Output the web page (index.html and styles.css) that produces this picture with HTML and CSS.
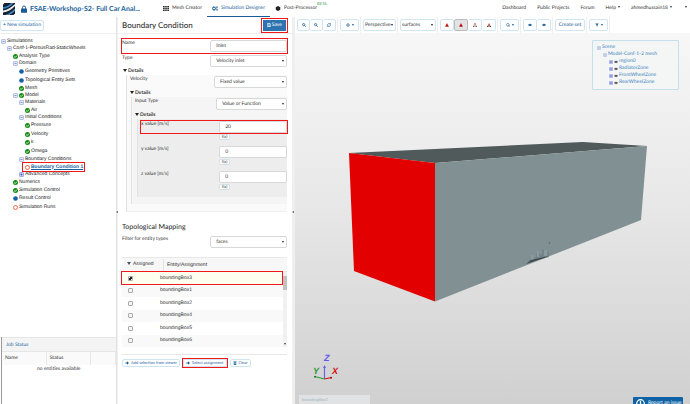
FILE: index.html
```html
<!DOCTYPE html>
<html lang="en">
<head>
<meta charset="utf-8">
<title>FSAE-Workshop-S2 - Simulation Designer</title>
<link rel="stylesheet" href="styles.css">
</head>
<body>
<svg class="defs" aria-hidden="true">
  <symbol id="ok" viewBox="0 0 10 10"><circle cx="5" cy="5" r="5" fill="#138a13"/><path d="M2.4 5.2 4.4 7.1 7.8 3.3" fill="none" stroke="#fff" stroke-width="1.7"/></symbol>
  <symbol id="dot" viewBox="0 0 10 10"><circle cx="5" cy="5" r="4.6" fill="#1261a8"/></symbol>
  <symbol id="ring" viewBox="0 0 10 10"><circle cx="5" cy="5" r="4" fill="#fff" stroke="#ee5a30" stroke-width="1.8"/></symbol>
  <symbol id="minus" viewBox="0 0 10 10"><rect x="1" y="1" width="8" height="8" rx="1" fill="#e4ebfa" stroke="#a3b5de" stroke-width="1.6"/><path d="M3 5h4" stroke="#5c72ac" stroke-width="1.4"/></symbol>
  <symbol id="plus" viewBox="0 0 10 10"><rect x="1" y="1" width="8" height="8" rx="1" fill="#d0d6fa" stroke="#8f9be0" stroke-width="1.6"/><path d="M3 5h4M5 3v4" stroke="#3342a8" stroke-width="1.4"/></symbol>
  <symbol id="eye" viewBox="0 0 12 10"><path d="M0 5Q6-2 12 5 6 12 0 5Z" fill="#444"/><circle cx="6" cy="5" r="1.6" fill="#ddd"/></symbol>
  <symbol id="zoomer" viewBox="0 0 10 10"><circle cx="4" cy="4" r="2.8" fill="#dbeaf6" stroke="#1b5c98" stroke-width="1.8"/><path d="m6 6 3.2 3.2" stroke="#1b5c98" stroke-width="2.2"/></symbol>
  <symbol id="fit" viewBox="0 0 10 10"><path d="M1.2 4.5A4 4 0 0 1 8 2.5M8.8 5.5A4 4 0 0 1 2 7.5" fill="none" stroke="#1b5c98" stroke-width="1.6"/><path d="M9.5 0v4H5.6zM.5 10V6h3.9z" fill="#1b5c98"/></symbol>
  <symbol id="move" viewBox="0 0 10 10"><path d="M5 0 7 2.4H5.9v1.7h1.7V3L10 5 7.6 7V5.900H5.900v1.700H7L5 10 3 7.600h1.100V5.900H2.400V7L0 5l2.400-2v1.100h1.700V2.400H3z" fill="#1b5c98"/></symbol>
  <symbol id="gear" viewBox="0 0 10 10"><path d="M1.500 6.500A3.600 3.600 0 1 1 7.500 6.800" fill="none" stroke="#1b5c98" stroke-width="1.500"/><path d="M5 6h4L8 9.500zM3.500 6.500h2v3h-2z" fill="#1b5c98"/></symbol>
  <symbol id="eyeb" viewBox="0 0 12 10"><path d="M0 5Q6-2 12 5 6 12 0 5Z" fill="#1b5c98"/><path d="M5 3.500h2M6 5v1" stroke="#fff"/></symbol>
  <symbol id="funnel" viewBox="0 0 10 10"><path d="M.5 1h9L6.200 5v4.500L3.800 8V5z" fill="#1b5c98"/></symbol>
  <symbol id="tri" viewBox="0 0 10 10"><path d="M5 0 7 4.500 9.800 9H.2L3 4.500z" fill="#d20c0c"/><path d="M1 8.500h8M3.600 4l2.800 4" stroke="#6d1010"/></symbol>
  <symbol id="tri-line" viewBox="0 0 10 10"><path d="M5 1 9 9H1z" fill="#fff" stroke="#555" stroke-width="1.200"/><path d="m3 6 2-1.500L7 6" fill="none" stroke="#d33"/><path d="M0 8h2.500v2H0zM7.500 8H10v2H7.500zM4 0h2v2H4z" fill="#b33"/></symbol>
  <symbol id="tri-half" viewBox="0 0 10 10"><path d="M5 0 8 6H2.500z" fill="#e01515"/><path d="M1 9 3 5.500 5 9 7 5.500 9 9z" fill="#fff" stroke="#333"/><path d="M0 8h2.200v2H0zM7.800 8H10v2H7.800z" fill="#222"/></symbol>
  <symbol id="arrow" viewBox="0 0 10 10"><path d="M1 3.500h4V.5L9.800 5 5 9.500v-3H1z" fill="#1b5c98"/></symbol>
</svg>

<header class="top">
  <svg class="logo" viewBox="0 0 24 24" aria-label="Logo"><path d="M0 3 3 0h21v21l-3 3H0z" fill="#17212b"/><path d="M0 8C8 8 13 3 17 0h4C16 6 9 11 0 12z" fill="#3c82c4"/><path d="M0 15C9 14 17 8 24 2v4C17 13 9 18 0 19z" fill="#e8eef3"/><path d="M4 24C12 22 19 16 24 11v4C20 20 15 23 11 24z" fill="#4a8ccb"/></svg>
  <svg class="lock" viewBox="0 0 12 15" aria-label="Private"><path d="M3 7V4.500a3 3 0 0 1 6 0V7" fill="none" stroke="#1b5a94" stroke-width="2"/><rect y="6.500" width="12" height="8.500" rx="1" fill="#1b5a94"/></svg>
  <h1 class="project">FSAE-Workshop-S2- Full Car Anal...</h1>
  <nav class="tabs">
    <a class="tab" href="#mesh"><svg viewBox="0 0 12 10"><path d="M0 0h3.400v2.600H0zM4.300 0h3.400v2.600H4.300zM8.600 0H12v2.600H8.600zM0 3.700h3.400v2.600H0zM4.300 3.700h3.400v2.600H4.300zM8.600 3.700H12v2.600H8.600zM0 7.400h3.400V10H0zM4.300 7.400h3.400V10H4.300zM8.600 7.400H12V10H8.600z" fill="#333"/></svg>Mesh Creator</a>
    <a class="tab current" href="#sim"><svg viewBox="0 0 12 10"><circle cx="4" cy="5" r="2.800" fill="none" stroke="#1b5c98" stroke-width="2"/><circle cx="4" cy="5" r="4" fill="none" stroke="#1b5c98" stroke-width="1.200" stroke-dasharray="1.500 1.600"/><circle cx="10" cy="2.500" r="1.300" fill="none" stroke="#1b5c98" stroke-width="1.300"/><circle cx="10" cy="7.500" r="1.300" fill="none" stroke="#1b5c98" stroke-width="1.300"/></svg>Simulation Designer</a>
    <a class="tab post" href="#post"><svg viewBox="0 0 12 10"><path d="M6 0 10.500 2.500v5L6 10 1.500 7.500v-5z" fill="#222"/></svg>Post-Processor<sup>BETA</sup></a>
  </nav>
  <nav class="links">
    <a href="#dash">Dashboard</a><a href="#projects">Public Projects</a><a href="#forum">Forum</a><a class="drop" href="#help">Help</a><a class="drop user" href="#user">ahmedhussain18</a><a class="drop" href="#more" aria-label="More"></a>
  </nav>
</header>

<main class="work">
  <aside class="side">
    <div class="side-bar"><button class="btn new"><b>+</b>New simulation</button></div>
    <ul class="tree">
      <li><span class="node"><svg><use href="#minus"/></svg>Simulations</span>
        <ul>
          <li><span class="node"><svg><use href="#minus"/></svg>Conf-1-PorousRad-StaticWheels</span>
            <ul>
              <li><span class="node mid"><svg><use href="#ok"/></svg>Analysis Type</span></li>
              <li><span class="node"><svg><use href="#minus"/></svg>Domain</span>
                <ul>
                  <li><span class="node tall"><svg><use href="#dot"/></svg>Geometry Primitives</span></li>
                  <li><span class="node mid"><svg><use href="#dot"/></svg>Topological Entity Sets</span></li>
                  <li><span class="node mid"><svg><use href="#ok"/></svg>Mesh</span></li>
                </ul></li>
              <li><span class="node"><svg><use href="#minus"/></svg><svg><use href="#ok"/></svg>Model</span>
                <ul>
                  <li><span class="node"><svg><use href="#minus"/></svg>Materials</span>
                    <ul><li><span class="node mid"><svg><use href="#ok"/></svg>Air</span></li></ul></li>
                  <li><span class="node"><svg><use href="#minus"/></svg>Initial Conditions</span>
                    <ul>
                      <li><span class="node tall"><svg><use href="#ok"/></svg>Pressure</span></li>
                      <li><span class="node mid"><svg><use href="#ok"/></svg>Velocity</span></li>
                      <li><span class="node tall"><svg><use href="#ok"/></svg>k</span></li>
                      <li><span class="node mid"><svg><use href="#ok"/></svg>Omega</span></li>
                    </ul></li>
                  <li><span class="node mid"><svg><use href="#minus"/></svg>Boundary Conditions</span>
                    <ul><li><span class="node mid active"><svg><use href="#ring"/></svg><a href="#bc1">Boundary Condition 1</a></span></li></ul></li>
                  <li><span class="node"><svg><use href="#plus"/></svg>Advanced Concepts</span></li>
                </ul></li>
              <li><span class="node mid"><svg><use href="#ok"/></svg>Numerics</span></li>
              <li><span class="node mid"><svg><use href="#ok"/></svg>Simulation Control</span></li>
              <li><span class="node tall"><svg><use href="#dot"/></svg>Result Control</span></li>
              <li><span class="node tall"><svg><use href="#ring"/></svg>Simulation Runs</span></li>
            </ul></li>
        </ul></li>
    </ul>
    <section class="jobs">
      <h2>Job Status</h2>
      <table>
        <thead><tr><th>Name</th><th>Status</th><th></th></tr></thead>
        <tbody><tr><td colspan="3">no entities available</td></tr></tbody>
      </table>
    </section>
  </aside>

  <section class="editor">
    <div class="panel">
      <div class="panel-head"><h2>Boundary Condition</h2>
        <button class="save marked"><svg viewBox="0 0 10 10"><path d="M1 1h6.500L9 2.500V9H1z" fill="none" stroke="#fff" stroke-width="1.500"/><path d="M3 1h3.500v2.500H3zM3 6h4v3H3z" fill="#fff"/></svg>Save</button></div>
      <form class="form">
        <div class="row name marked"><label for="name">Name</label><input id="name" value="Inlet"></div>
        <div class="row"><label for="type">Type</label><span class="pick"><select id="type"><option>Velocity inlet</option></select></span></div>
        <div class="details">Details</div>
        <div class="block one">
          <div class="row"><label for="vel">Velocity</label><span class="pick"><select id="vel"><option>Fixed value</option></select></span></div>
          <div class="details">Details</div>
          <div class="block two">
            <div class="row"><label for="input">Input Type</label><span class="pick"><select id="input"><option>Value or Function</option></select></span></div>
            <div class="details">Details</div>
            <div class="block three">
              <div class="row marked"><label for="x">x value [m/s]</label><input id="x" value="20"></div>
              <div class="row fx"><button type="button">f(x)</button></div>
              <div class="row"><label for="y">y value [m/s]</label><input id="y" value="0"></div>
              <div class="row fx"><button type="button">f(x)</button></div>
              <div class="row"><label for="z">z value [m/s]</label><input id="z" value="0"></div>
              <div class="row fx"><button type="button">f(x)</button></div>
            </div>
          </div>
        </div>
        <h3>Topological Mapping</h3>
        <div class="row"><label for="filter">Filter for entity types</label><span class="pick"><select id="filter"><option>faces</option></select></span></div>
        <div class="entities">
          <table>
            <thead><tr><th><i class="sort"></i>Assigned</th><th><span>Entity/Assignment</span></th></tr></thead>
            <tbody>
              <tr class="chosen"><td><input type="checkbox" id="b3" checked></td><td><label for="b3">boundingBox3</label></td></tr>
              <tr><td><input type="checkbox" id="b1"></td><td><label for="b1">boundingBox1</label></td></tr>
              <tr><td><input type="checkbox" id="b2"></td><td><label for="b2">boundingBox2</label></td></tr>
              <tr><td><input type="checkbox" id="b4"></td><td><label for="b4">boundingBox4</label></td></tr>
              <tr><td><input type="checkbox" id="b5"></td><td><label for="b5">boundingBox5</label></td></tr>
              <tr><td><input type="checkbox" id="b6"></td><td><label for="b6">boundingBox6</label></td></tr>
            </tbody>
          </table>
          <div class="scroll"><i class="thumb"></i><i class="down"></i></div>
          <div class="frame"></div>
        </div>
        <div class="actions">
          <button type="button" class="btn"><svg><use href="#arrow"/></svg>Add selection from viewer</button>
          <button type="button" class="btn marked"><svg><use href="#arrow"/></svg>Select assignment</button>
          <button type="button" class="btn"><svg viewBox="0 0 10 10"><path d="M1 1.500h8V3H1zM2 3.500h6V10H2z" fill="#1b5c98"/><path d="M4 4.500v4M6 4.500v4" stroke="#fff"/></svg>Clear</button>
        </div>
      </form>
    </div>
    <i class="grip left"></i><i class="grip right"></i>
  </section>

  <section class="viewer">
    <div class="toolbar">
      <div class="group"><button aria-label="Zoom in"><svg><use href="#zoomer"/></svg></button><button aria-label="Zoom out"><svg><use href="#zoomer"/></svg></button><button aria-label="Reset"><svg><use href="#fit"/></svg></button></div>
      <div class="group"><button class="menu" aria-label="Move"><svg><use href="#move"/></svg></button></div>
      <div class="group"><span class="pick"><select class="persp" aria-label="Projection"><option>Perspective</option></select></span></div>
      <div class="group"><span class="pick"><select class="surf" aria-label="Display"><option>surfaces</option></select></span></div>
      <div class="group wide"><button aria-label="Solid"><svg><use href="#tri"/></svg></button><button class="on" aria-label="Surface"><svg><use href="#tri"/></svg></button><button aria-label="Wireframe"><svg><use href="#tri-line"/></svg></button><button aria-label="Points"><svg><use href="#tri-half"/></svg></button></div>
      <div class="group"><button class="menu" aria-label="Pick"><svg><use href="#gear"/></svg></button></div>
      <div class="group wide"><button aria-label="Hide"><svg><use href="#eyeb"/></svg></button><button aria-label="Show"><svg><use href="#eyeb"/></svg></button></div>
      <div class="group"><button class="create">Create set</button></div>
      <div class="group"><button class="menu" aria-label="Filter"><svg><use href="#funnel"/></svg></button></div>
    </div>
    <div class="scene">
      <svg class="model" viewBox="0 0 395 371" preserveAspectRatio="xMidYMid slice" role="img" aria-label="Bounding box with inlet face selected">
        <path d="M54 120 288 109 352 113 140 130z" fill="#505a5a"/>
        <path d="M140 130 352 113 346 187 140 268.500z" fill="#819093"/>
        <path d="M54 120 140 130V268.500L59 238z" fill="#e20000"/>
        <path d="m232 230 3-4 6-2v-3l4-1v2l2-1v-5l3 1v3l4-1v5z" fill="#74858a"/>
        <path d="M236 222h3v5h-3zM242 218h2v6h-2zM249 217h3v6h-3z" fill="#8a9a9e"/>
        <path d="m231 231 5-4 17-4-4 2z" fill="#414b50"/><circle cx="254.500" cy="210" r=".7" fill="#505f66"/>
        <g fill="none" stroke-width="1.200"><path d="M29.500 346V333" stroke="#6a62e8"/><path d="m29.500 346-10-2.500" stroke="#2c9c38"/><path d="m29.500 346 7-1.500" stroke="#d01010"/></g>
        <path d="m28 335 1.500-3 1.500 3z" fill="#6a62e8"/><circle cx="36" cy="344.700" r="1" fill="#a01010"/><circle cx="20" cy="343.700" r="1" fill="#1c7c28"/>
        <g class="axes"><text x="29" y="328" fill="#6158ee">Z</text><text x="18" y="341" fill="#279a32">Y</text><text x="37" y="341" fill="#d80f0f">X</text></g>
      </svg>
      <div class="scene-tree">
        <ul>
          <li><span class="node"><svg><use href="#minus"/></svg>Scene</span>
            <ul><li><span class="node"><svg><use href="#minus"/></svg>Model-Conf-1-2 mesh</span>
              <ul>
                <li><span class="node"><svg><use href="#plus"/></svg><svg><use href="#eye"/></svg>region0</span></li>
                <li><span class="node"><svg><use href="#plus"/></svg><svg><use href="#eye"/></svg>RadiatorZone</span></li>
                <li><span class="node"><svg><use href="#plus"/></svg><svg><use href="#eye"/></svg>FrontWheelZone</span></li>
                <li><span class="node"><svg><use href="#plus"/></svg><svg><use href="#eye"/></svg>RearWheelZone</span></li>
              </ul></li></ul></li>
        </ul>
      </div>
      <div class="picked">boundingBox3</div>
      <button class="report"><svg viewBox="0 0 10 10"><circle cx="5" cy="5" r="4.200" fill="none" stroke="#fff" stroke-width="1.400"/><path d="M5 2v4M5 7v1.200" stroke="#fff" stroke-width="1.400"/></svg>Report an issue</button>
    </div>
  </section>
</main>
</body>
</html>
```

FILE: styles.css
```css
* { box-sizing: border-box; }

body {
  margin: 0;
  height: 100vh;
  display: flex;
  flex-direction: column;
  overflow: hidden;
  background: #fff;
  color: #333;
  font: 5px/7px Lato, "Liberation Sans", sans-serif;
  text-rendering: geometricPrecision;
}

h1, h2, h3, ul, table { margin: 0; padding: 0; }
h1, h2, h3, th { font-weight: 400; text-align: left; }
ul { list-style: none; }
a { color: inherit; text-decoration: none; }
button, input, select { margin: 0; font: inherit; color: inherit; text-rendering: inherit; }
svg { display: block; flex: none; }
table { width: 100%; border-collapse: collapse; table-layout: fixed; }
th, td { padding: 0; }
.defs { position: absolute; width: 0; height: 0; }
.marked { outline: 1px solid #f01818; }

/* Top bar */
.top { display: flex; align-items: center; flex: none; height: 17px; padding: 0 3px; }
.logo { width: 12px; height: 12px; }
.lock { width: 6px; height: 8px; margin: 0 3px 0 6px; }
.project { width: 128px; color: #226299; font-size: 7px; line-height: 14px; white-space: nowrap; font-weight: 700; }
.tabs { display: flex; height: 16px; }
.tab { display: flex; align-items: center; gap: 3px; padding: 0 5px; height: 16px; white-space: nowrap; border-bottom: 1px solid transparent; }
.tab svg { width: 6px; height: 5px; }
.tab.current { color: #1b5c98; border-color: #1b5c98; }
.tab sup { align-self: flex-start; margin-left: -3px; font-size: 4px; line-height: 6px; color: #33943b; }
.links { display: flex; gap: 11px; margin-left: auto; white-space: nowrap; }
.drop::after { content: ""; display: inline-block; margin-left: 2px; vertical-align: 1px; border: 1px solid transparent; border-top: 2px solid #333; border-bottom: 0; }

/* Work area */
.work { flex: 1; min-height: 0; display: grid; grid-template-columns: 117px 178px 1fr; }
.side { display: flex; flex-direction: column; min-height: 0; border-right: 1px solid #e4e4e4; }
.side-bar { height: 17px; padding: 3px 0; border-bottom: 1px solid #eee; }
.btn {
  display: flex; align-items: center; gap: 1px;
  border: 1px solid #cfe6f2; border-radius: 2px; background: #fff;
  color: #1f67a5; padding: 0 2px; white-space: nowrap;
}
.btn svg { width: 4px; height: 4px; }
.new { height: 11px; padding: 0 2px; }

.tree { flex: 1; padding: 4px 0 0 1px; font-family: "Liberation Sans", sans-serif; color: #222; }
.tree ul { padding-left: 6px; }
.node { display: flex; align-items: center; gap: 1px; height: 7px; white-space: nowrap; }
.node.mid { height: 8px; }
.node.tall { height: 9px; }
.node svg { width: 5px; height: 5px; }
.active { width: 61px; margin-left: -2px; padding-left: 2px; background: #fff; outline: 1px solid #f01818; position: relative; }
.active a { color: #1a5f9e; font-weight: 700; text-decoration: underline; }

.jobs { margin-left: 1px; min-height: 67px; border-left: 1px solid #999; }
.jobs h2 { height: 15px; padding: 0 4px; font-size: 5px; line-height: 14px; color: #2a6ca5; background: #f4f4f4; border: 1px solid #e6e6e6; border-width: 1px 0; }
.jobs th { height: 13px; padding-left: 3px; border-right: 1px solid #e8e8e8; background: #fafafa; }
.jobs th:last-child { width: 25px; }
.jobs td { height: 9px; text-align: center; }

/* Editor */
.editor { position: relative; background: #efefef; padding: 0 3px 0 1px; min-height: 0; }
.grip { position: absolute; top: 50%; border: 1px solid transparent; }
.grip.left { left: -1px; border-right: 2px solid #555; border-left: 0; }
.grip.right { right: 1px; border-right: 2px solid #555; border-left: 0; }
.panel { height: 100%; background: #fff; }
.panel-head { display: flex; align-items: center; justify-content: space-between; height: 17px; padding: 0 6px 0 4px; border-bottom: 1px solid #eee; }
.panel-head h2 { font-size: 8px; line-height: 10px; font-weight: 500; }
.save { display: flex; align-items: center; gap: 1px; height: 11px; padding: 0 4px; border: 0; border-radius: 0; background: #2d73b0; color: #fff; outline-offset: 1px; }
.save svg { width: 4px; height: 4px; }
.form { padding: 5px 5px 0 4px; }
.row { display: grid; grid-template-columns: 1fr 46.5%; align-items: start; }
.row.name { padding: 1px 0; margin-bottom: 2px; }
.row input, .pick select {
  width: 100%; height: 12px; padding: 0 5px; appearance: none;
  background: #fff; border: 1px solid #d8d8d8; border-radius: 2px; outline: 0;
}
.pick { position: relative; display: block; }
.pick::after { content: ""; position: absolute; right: 3px; top: 5px; border: 1px solid transparent; border-top: 2px solid #222; border-bottom: 0; }
.details { height: 8px; padding-left: 1px; line-height: 8px; font-weight: 700; }
.details::before { content: ""; display: inline-block; margin-right: 1px; border: 2px solid transparent; border-top: 3px solid #222; border-bottom: 0; }
.block { padding: 1px 0 7px 3px; border-left: 1px solid #e2e2e2; }
.block .details { margin-top: 1px; padding-left: 0; }
.one { margin-left: 4px; background: #fafafa; border-bottom: 1px solid #eee; }
.two { margin-left: 1px; background: #f5f5f5; }
.three { margin-left: 2px; padding-top: 2px; background: #ededed; }
.fx { padding: 1px 0 6px; }
.fx:last-child { padding-bottom: 0; }
.fx button { grid-column: 2; width: 11px; height: 6px; padding: 0; border: 1px solid #d2e2ea; border-radius: 1px; background: #fff; font-size: 4px; line-height: 4px; }
.form h3 { margin: 10px 0 4px; font-size: 7px; line-height: 10px; font-weight: 500; }

.entities { position: relative; margin-top: 9px; padding-bottom: 7px; border-bottom: 1px solid #e8e8e8; font-family: "Liberation Sans", sans-serif; }
.entities th { height: 14px; background: #f7f7f7; border: 1px solid #e8e8e8; border-width: 1px 0; }
.entities th:first-child { width: 38px; padding-left: 5px; }
.entities th span { display: block; margin-left: 3px; padding-left: 3px; line-height: 12px; border-left: 1px solid #e4e4e4; }
.sort { display: inline-block; margin-right: 2px; border: 2px solid transparent; border-top: 3px solid #456; border-bottom: 0; }
.entities tbody tr { height: 13px; }
.entities tbody tr:nth-child(even) { height: 12px; background: #f9f9f9; }
.entities tbody td:first-child { padding-left: 6px; }
.entities tbody .chosen { background: #fffff0; }
.frame { position: absolute; left: -1px; right: 4px; top: 14px; height: 14px; border: 1px solid #f01818; pointer-events: none; }
.entities input {
  display: block; width: 5px; height: 5px; appearance: none;
  border: 1px solid #aaa; border-radius: 1px; background: #f4f4f4;
}
.entities input:checked { background: linear-gradient(135deg, #fff 30%, #222 30% 70%, #fff 70%); }
.scroll { position: absolute; right: 0; top: 15px; bottom: 7px; width: 4px; background: #f1f1f1; }
.thumb { display: block; height: 14px; margin-top: 4px; background: #c1c1c1; }
.down { position: absolute; left: 1px; bottom: 2px; border: 1px solid transparent; border-top: 2px solid #444; border-bottom: 0; }
.actions { display: flex; gap: 3px; margin-top: 4px; }
.actions .btn { height: 8px; gap: 2px; font-size: 4px; line-height: 6px; }
.actions .marked { border-radius: 0; outline: 1px solid #f01818; }

/* Viewer */
.viewer { display: flex; flex-direction: column; min-width: 0; min-height: 0; }
.toolbar { display: flex; height: 16px; flex: none; }
.group { display: flex; align-items: center; padding: 0 1px 0 2px; border-right: 1px solid #efefef; }
.group button, .group .pick select { height: 12px; border: 1px solid #cfe6f2; background: #fff; border-radius: 2px; }
.group button { display: flex; align-items: center; justify-content: center; width: 13px; padding: 0; color: #1b5c98; white-space: nowrap; }
.group button + button { border-left: 0; }
.group.wide button { width: 14px; }
.group svg { width: 4px; height: 4px; }
.group .menu { width: 19px; gap: 2px; }
.menu::after { content: ""; border: 1px solid transparent; border-top: 2px solid #1b5c98; border-bottom: 0; }
.group .create { width: 30px; }
.group .on { background: #e3e3e3; border: 1px solid #bbb; }
.group .pick select { padding: 0 1px; }
.group .pick .persp { width: 33px; }
.group .pick .surf { width: 36px; }

.scene { position: relative; flex: 1; overflow: hidden; background: linear-gradient(#f7f7f7, #e8e8e8 45%, #d0d0d0); }
.model { position: absolute; inset: 0; width: 100%; height: 100%; }
.axes { font: italic 700 9px "Liberation Sans", sans-serif; }
.scene-tree { position: absolute; top: 7px; right: 11px; width: 87px; height: 50px; padding: 3px 4px; background: #f4f5f5; border: 1px solid #c4e0ea; border-radius: 1px; color: #3f86bd; }
.scene-tree ul ul { padding-left: 6px; }
.scene-tree svg { width: 4px; height: 4px; }
.picked { position: absolute; left: 4px; bottom: 0; width: 71px; height: 9px; padding: 2px 3px; background: #e0e2e3; color: #9eb2c0; font-size: 4px; line-height: 6px; }
.report { position: absolute; right: 7px; bottom: -5px; width: 50px; height: 12px; display: flex; align-items: center; gap: 3px; padding: 0 3px; border: 0; border-radius: 1px; background: #0f62a5; color: #fff; white-space: nowrap; }
.report svg { width: 9px; height: 9px; }
```
